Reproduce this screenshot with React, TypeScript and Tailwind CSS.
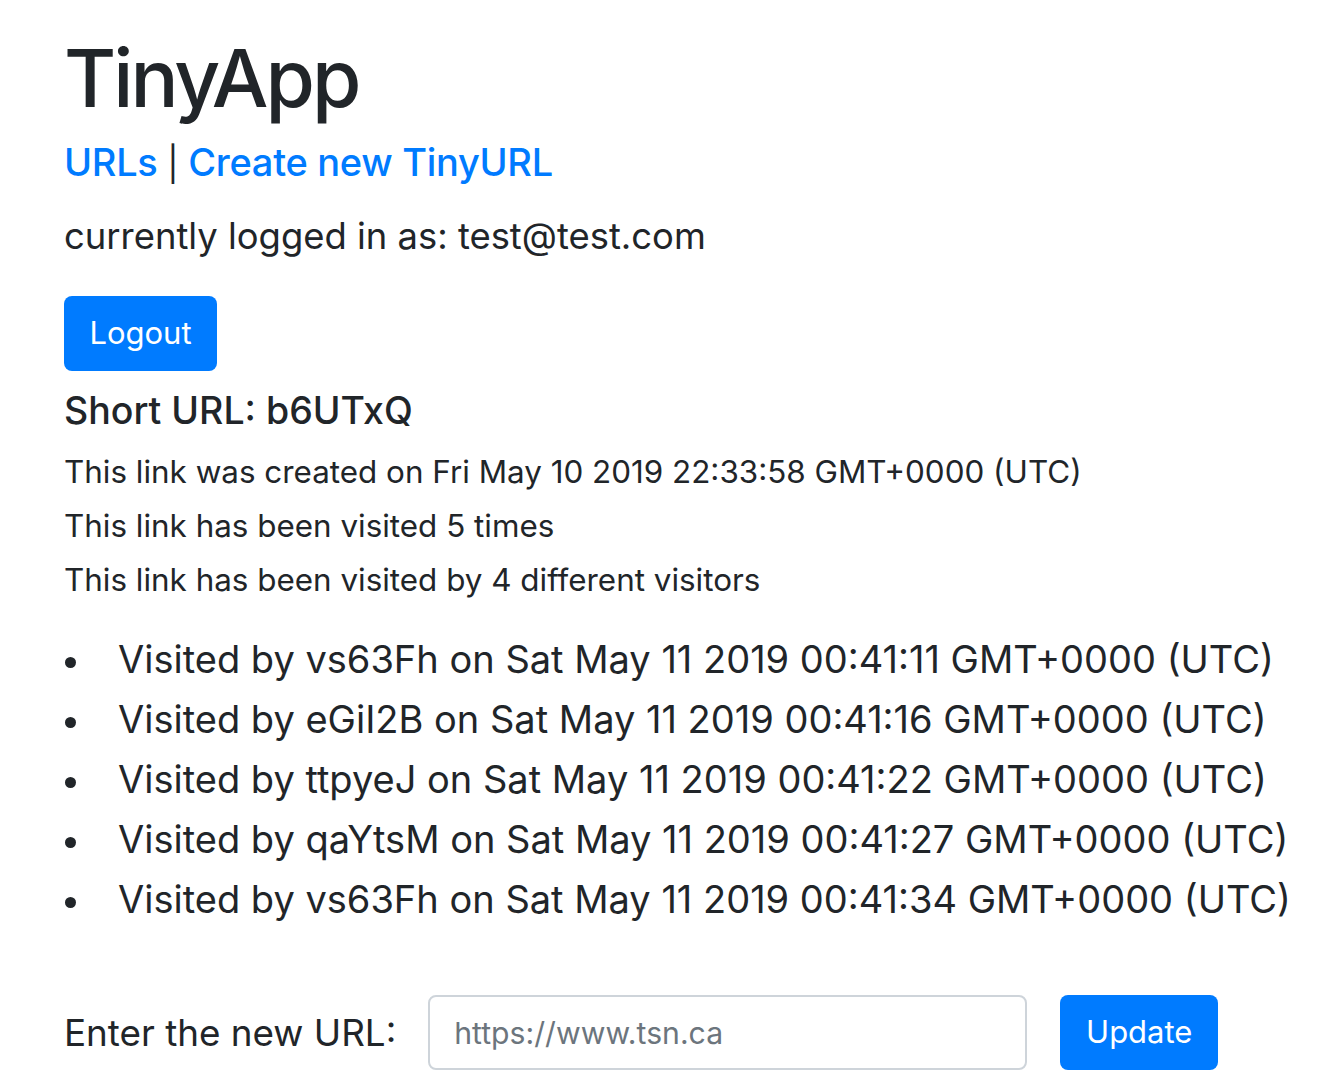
const visits = [
  { id: 'vs63Fh', time: '00:41:11' },
  { id: 'eGiI2B', time: '00:41:16' },
  { id: 'ttpyeJ', time: '00:41:22' },
  { id: 'qaYtsM', time: '00:41:27' },
  { id: 'vs63Fh', time: '00:41:34' },
];

export default function App() {
  return (
    <div className="min-h-screen bg-white text-[#212529] font-['Inter',sans-serif] pl-16 pt-[30px]">
      <h1 className="text-[80px] leading-[96px] font-medium tracking-[-3px]">TinyApp</h1>

      <div className="mt-3 h-[48px] text-[38px] leading-[48px] font-medium tracking-[-0.3px]">
        <a href="#" className="text-[#007bff]">URLs</a> <span className="font-normal text-[34px] leading-none">|</span> <a href="#" className="text-[#007bff]">Create new TinyURL</a>
      </div>

      <p className="mt-[26px] text-[36.4px] leading-[48px]">currently logged in as: test@test.com</p>

      <button className="mt-9 h-[75px] w-[153px] rounded-lg bg-[#007bff] text-white text-[31px]">Logout</button>

      <h3 className="mt-4 text-[37.5px] leading-[48px] font-medium">Short URL: b6UTxQ</h3>

      <div className="mt-[10px] text-[31.4px] leading-[54px]">
        <p>This link was created on Fri May 10 2019 22:33:58 GMT+0000 (UTC)</p>
        <p>This link has been visited 5 times</p>
        <p>This link has been visited by 4 different visitors</p>
      </div>

      <ul className="mt-[22px] text-[38px] leading-[60px] whitespace-nowrap">
        {visits.map((v, i) => (
          <li key={i} className="flex items-center">
            <span className="w-[54px] shrink-0 flex">
              <span className="ml-[1px] mt-[6px] w-[11px] h-[11px] rounded-full bg-[#212529]" />
            </span>
            <span>Visited by {v.id} on Sat May 11 2019 {v.time} GMT+0000 (UTC)</span>
          </li>
        ))}
      </ul>

      <form className="mt-[66px] flex items-center" onSubmit={e => e.preventDefault()}>
        <label className="text-[36.8px]">Enter the new URL:</label>
        <input
          type="text"
          placeholder="https://www.tsn.ca"
          className="ml-[32px] w-[599px] h-[75px] px-6 rounded-lg border-2 border-[#ced4da] text-[30.2px] placeholder:text-[#6c757d] outline-none"
        />
        <button type="submit" className="ml-[33px] h-[75px] w-[158px] rounded-lg bg-[#007bff] text-white text-[31px]">Update</button>
      </form>
    </div>
  );
}
